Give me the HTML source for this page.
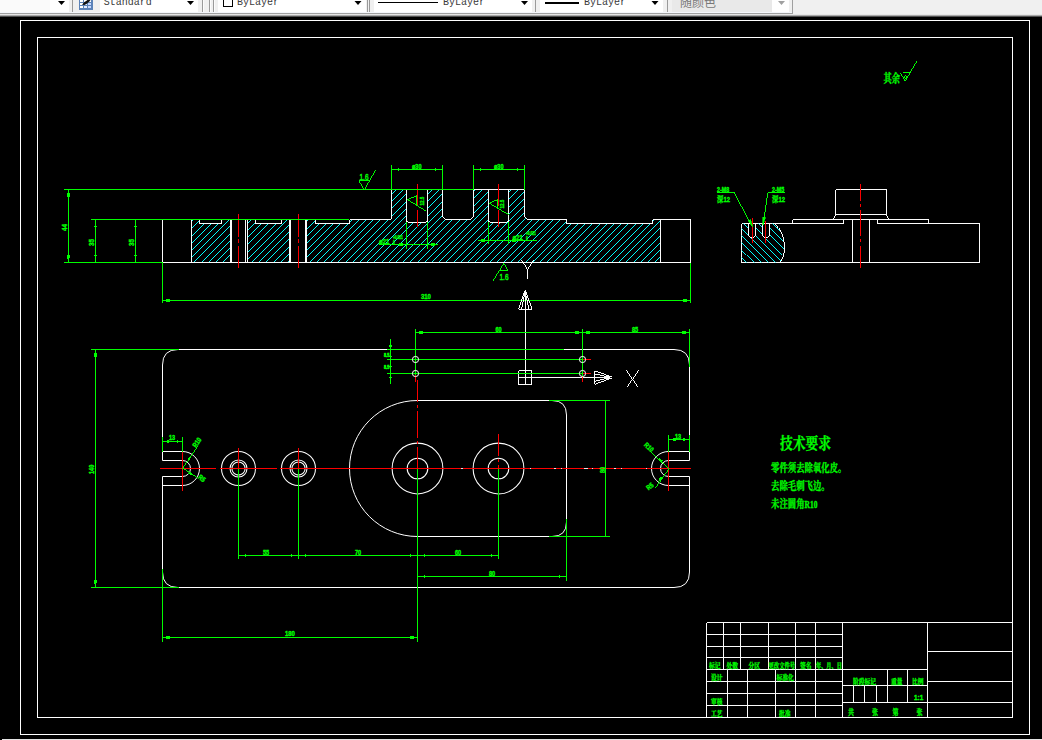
<!DOCTYPE html>
<html><head><meta charset="utf-8"><title>CAD</title>
<style>
html,body{margin:0;padding:0;background:#000;}
body{width:1042px;height:740px;overflow:hidden;position:relative;font-family:"Liberation Sans",sans-serif;}
svg{position:absolute;left:0;top:0;display:block;}
text{white-space:pre;}
</style></head><body>
<svg width="1042" height="740" viewBox="0 0 1042 740" shape-rendering="crispEdges">
<defs><clipPath id="hc1"><path d="M191.5,219.5 H199.5 V223.5 H221.5 V219.5 H230.4 V262.5 H191.5 Z M247,219.5 H255.5 V223.5 H281.5 V219.5 H289.9 V262.5 H247 Z M307,219.5 H315.5 V223.5 H349.5 V219.5 H389 Q391.5,219.5 391.5,217 V189.5 H406.5 V222 H427.5 V189.5 H442.5 V215 Q442.5,219.5 447,219.5 H469 Q473.5,219.5 473.5,215 V189.5 H488.5 V222 H508.5 V189.5 H524.5 V215 Q524.5,219.5 529,219.5 H566.5 V223.5 H652.5 V219.5 H660.5 V262.5 H307 Z"/></clipPath><clipPath id="hc2"><path d="M741.5,223.5 H748.5 V235 Q748.5,237.5 752,237.5 Q755.5,237.5 755.5,235 V223.5 H762.5 V235 Q762.5,237.5 766,237.5 Q769.5,237.5 769.5,235 V223.5 H775.5 Q783,231 784.5,245 Q785,256 780,262.5 H741.5 Z"/></clipPath></defs>
<rect x="0" y="0" width="1042" height="740" fill="#000" stroke="none" />
<rect x="20.5" y="20.5" width="1009" height="714" fill="none" stroke="#ffffff"/>
<rect x="37.5" y="37.5" width="975" height="680" fill="none" stroke="#ffffff"/>
<g clip-path="url(#hc1)" shape-rendering="crispEdges"><path d="M85.56,270 L175.56,180 M92.76,270 L182.76,180 M99.96,270 L189.96,180 M107.16,270 L197.16,180 M114.36,270 L204.36,180 M121.56,270 L211.56,180 M128.76,270 L218.76,180 M135.96,270 L225.96,180 M143.16,270 L233.16,180 M150.36,270 L240.36,180 M157.56,270 L247.56,180 M164.76,270 L254.76,180 M171.96,270 L261.96,180 M179.16,270 L269.16,180 M186.36,270 L276.36,180 M193.56,270 L283.56,180 M200.76,270 L290.76,180 M207.96,270 L297.96,180 M215.16,270 L305.16,180 M222.36,270 L312.36,180 M229.56,270 L319.56,180 M236.76,270 L326.76,180 M243.96,270 L333.96,180 M251.16,270 L341.16,180 M258.36,270 L348.36,180 M265.56,270 L355.56,180 M272.76,270 L362.76,180 M279.96,270 L369.96,180 M287.16,270 L377.16,180 M294.36,270 L384.36,180 M301.56,270 L391.56,180 M308.76,270 L398.76,180 M315.96,270 L405.96,180 M323.16,270 L413.16,180 M330.36,270 L420.36,180 M337.56,270 L427.56,180 M344.76,270 L434.76,180 M351.96,270 L441.96,180 M359.16,270 L449.16,180 M366.36,270 L456.36,180 M373.56,270 L463.56,180 M380.76,270 L470.76,180 M387.96,270 L477.96,180 M395.16,270 L485.16,180 M402.36,270 L492.36,180 M409.56,270 L499.56,180 M416.76,270 L506.76,180 M423.96,270 L513.96,180 M431.16,270 L521.16,180 M438.36,270 L528.36,180 M445.56,270 L535.56,180 M452.76,270 L542.76,180 M459.96,270 L549.96,180 M467.16,270 L557.16,180 M474.36,270 L564.36,180 M481.56,270 L571.56,180 M488.76,270 L578.76,180 M495.96,270 L585.96,180 M503.16,270 L593.16,180 M510.36,270 L600.36,180 M517.56,270 L607.56,180 M524.76,270 L614.76,180 M531.96,270 L621.96,180 M539.16,270 L629.16,180 M546.36,270 L636.36,180 M553.56,270 L643.56,180 M560.76,270 L650.76,180 M567.96,270 L657.96,180 M575.16,270 L665.16,180 M582.36,270 L672.36,180 M589.56,270 L679.56,180 M596.76,270 L686.76,180 M603.96,270 L693.96,180 M611.16,270 L701.16,180 M618.36,270 L708.36,180 M625.56,270 L715.56,180 M632.76,270 L722.76,180 M639.96,270 L729.96,180 M647.16,270 L737.16,180 M654.36,270 L744.36,180 M661.56,270 L751.56,180 M668.76,270 L758.76,180 M675.96,270 L765.96,180 M683.16,270 L773.16,180 M690.36,270 L780.36,180 M697.56,270 L787.56,180 M704.76,270 L794.76,180 M711.96,270 L801.96,180 M719.16,270 L809.16,180 M726.36,270 L816.36,180" stroke="#00ffff" stroke-width="0.99" fill="none"/></g>
<path d="M162.5,219.5 H199.5 V223.5 H221.5 V219.5 H255.5 V223.5 H281.5 V219.5 H315.5 V223.5 H349.5 V219.5 H389 Q391.5,219.5 391.5,217 V189.5 H442.5 V215 Q442.5,219.5 447,219.5 H469 Q473.5,219.5 473.5,215 V189.5 H524.5 V215 Q524.5,219.5 529,219.5 H566.5 V223.5 H652.5 V219.5 H690.5 V262.5 H162.5 Z" stroke="#ffffff" stroke-width="0.99" fill="none" />
<path d="M406.5,189.5 V220.5 Q406.5,222 408,222 H426 Q427.5,222 427.5,220.5 V189.5" stroke="#ffffff" stroke-width="0.99" fill="none" />
<path d="M488.5,189.5 V220.5 Q488.5,222 490,222 H507 Q508.5,222 508.5,220.5 V189.5" stroke="#ffffff" stroke-width="0.99" fill="none" />
<line x1="191.5" y1="219.5" x2="191.5" y2="262.5" stroke="#ffffff" stroke-width="0.99" />
<line x1="230.5" y1="219.5" x2="230.5" y2="262.5" stroke="#ffffff" stroke-width="0.99" />
<line x1="231.5" y1="219.5" x2="231.5" y2="262.5" stroke="#ffffff" stroke-width="0.99" />
<line x1="245.5" y1="219.5" x2="245.5" y2="262.5" stroke="#ffffff" stroke-width="0.99" />
<line x1="247.5" y1="219.5" x2="247.5" y2="262.5" stroke="#ffffff" stroke-width="0.99" />
<line x1="289.5" y1="219.5" x2="289.5" y2="262.5" stroke="#ffffff" stroke-width="0.99" />
<line x1="290.5" y1="219.5" x2="290.5" y2="262.5" stroke="#ffffff" stroke-width="0.99" />
<line x1="305.5" y1="219.5" x2="305.5" y2="262.5" stroke="#ffffff" stroke-width="0.99" />
<line x1="306.5" y1="219.5" x2="306.5" y2="262.5" stroke="#ffffff" stroke-width="0.99" />
<line x1="660.5" y1="219.5" x2="660.5" y2="262.5" stroke="#ffffff" stroke-width="0.99" />
<path d="M238.5,213.5 V237 M238.5,239 V243 M238.5,246 V268" stroke="#ff0000" stroke-width="0.99" fill="none" />
<path d="M298.5,213.5 V237 M298.5,239 V243 M298.5,246 V268" stroke="#ff0000" stroke-width="0.99" fill="none" />
<path d="M417.5,184 V205.5 M417.5,209.5 V226.5" stroke="#ff0000" stroke-width="0.99" fill="none" />
<path d="M498.5,184 V205.5 M498.5,209.5 V226.5" stroke="#ff0000" stroke-width="0.99" fill="none" />
<line x1="64" y1="189.5" x2="473.5" y2="189.5" stroke="#00ff00" stroke-width="0.99" />
<line x1="91" y1="219.5" x2="349" y2="219.5" stroke="#00ff00" stroke-width="0.99" />
<line x1="64" y1="262.5" x2="162.5" y2="262.5" stroke="#00ff00" stroke-width="0.99" />
<line x1="68.5" y1="189.5" x2="68.5" y2="262.5" stroke="#00ff00" stroke-width="0.99" />
<line x1="95.5" y1="219.5" x2="95.5" y2="262.5" stroke="#00ff00" stroke-width="0.99" />
<line x1="135.5" y1="219.5" x2="135.5" y2="262.5" stroke="#00ff00" stroke-width="0.99" />
<line x1="162.5" y1="262.5" x2="162.5" y2="303" stroke="#00ff00" stroke-width="0.99" />
<line x1="690.5" y1="262.5" x2="690.5" y2="303" stroke="#00ff00" stroke-width="0.99" />
<line x1="162.5" y1="300.5" x2="690.5" y2="300.5" stroke="#00ff00" stroke-width="0.99" />
<path d="M162.5,300.5 L170.0,298.6 L170.0,302.4 Z" fill="#00ff00" stroke="none"/>
<path d="M690.5,300.5 L683.0,298.6 L683.0,302.4 Z" fill="#00ff00" stroke="none"/>
<path d="M68.5,189.5 L66.6,197.0 L70.4,197.0 Z" fill="#00ff00" stroke="none"/>
<path d="M68.5,262.5 L66.6,255.0 L70.4,255.0 Z" fill="#00ff00" stroke="none"/>
<path d="M95.5,219.5 L94.4,227.0 L96.6,227.0 Z" fill="#00ff00" stroke="none"/>
<path d="M95.5,262.5 L94.4,255.0 L96.6,255.0 Z" fill="#00ff00" stroke="none"/>
<path d="M135.5,219.5 L134.4,227.0 L136.6,227.0 Z" fill="#00ff00" stroke="none"/>
<path d="M135.5,262.5 L134.4,255.0 L136.6,255.0 Z" fill="#00ff00" stroke="none"/>
<text transform="translate(67,231) rotate(-90) scale(0.9,1)" font-family="Liberation Sans" font-size="7" font-weight="bold" fill="#00ff00" stroke="#00ff00" stroke-width="0.35" text-anchor="start" >44</text>
<text transform="translate(94,246) rotate(-90) scale(0.9,1)" font-family="Liberation Sans" font-size="7" font-weight="bold" fill="#00ff00" stroke="#00ff00" stroke-width="0.35" text-anchor="start" >35</text>
<text transform="translate(134,246) rotate(-90) scale(0.9,1)" font-family="Liberation Sans" font-size="7" font-weight="bold" fill="#00ff00" stroke="#00ff00" stroke-width="0.35" text-anchor="start" >35</text>
<text transform="translate(421,298.5) scale(0.85,1)" font-family="Liberation Sans" font-size="7" font-weight="bold" fill="#00ff00" stroke="#00ff00" stroke-width="0.35" text-anchor="start" >310</text>
<line x1="391.5" y1="165" x2="391.5" y2="189.5" stroke="#00ff00" stroke-width="0.99" />
<line x1="442.5" y1="165" x2="442.5" y2="189.5" stroke="#00ff00" stroke-width="0.99" />
<line x1="391.5" y1="169.5" x2="442.5" y2="169.5" stroke="#00ff00" stroke-width="0.99" />
<path d="M391.5,169.5 L399.0,168.4 L399.0,170.6 Z" fill="#00ff00" stroke="none"/>
<path d="M442.5,169.5 L435.0,168.4 L435.0,170.6 Z" fill="#00ff00" stroke="none"/>
<line x1="473.5" y1="165" x2="473.5" y2="189.5" stroke="#00ff00" stroke-width="0.99" />
<line x1="524.5" y1="165" x2="524.5" y2="189.5" stroke="#00ff00" stroke-width="0.99" />
<line x1="473.5" y1="169.5" x2="524.5" y2="169.5" stroke="#00ff00" stroke-width="0.99" />
<path d="M473.5,169.5 L481.0,168.4 L481.0,170.6 Z" fill="#00ff00" stroke="none"/>
<path d="M524.5,169.5 L517.0,168.4 L517.0,170.6 Z" fill="#00ff00" stroke="none"/>
<text transform="translate(412,168.5) scale(0.85,1)" font-family="Liberation Sans" font-size="6.5" font-weight="bold" fill="#00ff00" stroke="#00ff00" stroke-width="0.35" text-anchor="start" >ø30</text>
<text transform="translate(494,168.5) scale(0.85,1)" font-family="Liberation Sans" font-size="6.5" font-weight="bold" fill="#00ff00" stroke="#00ff00" stroke-width="0.35" text-anchor="start" >ø30</text>
<line x1="406.5" y1="222" x2="406.5" y2="249" stroke="#00ff00" stroke-width="0.99" />
<line x1="427.5" y1="222" x2="427.5" y2="249" stroke="#00ff00" stroke-width="0.99" />
<line x1="379" y1="244.5" x2="438" y2="244.5" stroke="#00ff00" stroke-width="0.99" />
<path d="M406.5,244.5 L399.0,242.6 L399.0,246.4 Z" fill="#00ff00" stroke="none"/>
<path d="M427.5,244.5 L435.0,242.6 L435.0,246.4 Z" fill="#00ff00" stroke="none"/>
<text transform="translate(379,244) scale(0.75,1)" font-family="Liberation Sans" font-size="8" font-weight="bold" fill="#00ff00" stroke="#00ff00" stroke-width="0.35" text-anchor="start" >ø21</text>
<text transform="translate(393,239) scale(0.7,1)" font-family="Liberation Sans" font-size="4.5" font-weight="bold" fill="#00ff00" stroke="#00ff00" stroke-width="0.35" text-anchor="start" >+0.021</text>
<text transform="translate(393,243.5) scale(0.7,1)" font-family="Liberation Sans" font-size="4.5" font-weight="bold" fill="#00ff00" stroke="#00ff00" stroke-width="0.35" text-anchor="start" >0</text>
<line x1="488.5" y1="222" x2="488.5" y2="244" stroke="#00ff00" stroke-width="0.99" />
<line x1="508.5" y1="222" x2="508.5" y2="244" stroke="#00ff00" stroke-width="0.99" />
<line x1="478" y1="240.5" x2="537" y2="240.5" stroke="#00ff00" stroke-width="0.99" />
<path d="M488.5,240.5 L481.0,238.6 L481.0,242.4 Z" fill="#00ff00" stroke="none"/>
<path d="M508.5,240.5 L516.0,238.6 L516.0,242.4 Z" fill="#00ff00" stroke="none"/>
<text transform="translate(512.5,240) scale(0.75,1)" font-family="Liberation Sans" font-size="8" font-weight="bold" fill="#00ff00" stroke="#00ff00" stroke-width="0.35" text-anchor="start" >ø21</text>
<text transform="translate(526,235) scale(0.7,1)" font-family="Liberation Sans" font-size="4.5" font-weight="bold" fill="#00ff00" stroke="#00ff00" stroke-width="0.35" text-anchor="start" >+0.021</text>
<text transform="translate(526,239.5) scale(0.7,1)" font-family="Liberation Sans" font-size="4.5" font-weight="bold" fill="#00ff00" stroke="#00ff00" stroke-width="0.35" text-anchor="start" >0</text>
<path d="M359.3,180.5 H369 M359.3,180.5 L364.5,189.5 L375.7,170" stroke="#00ff00" stroke-width="0.99" fill="none" />
<text transform="translate(359.5,180) scale(0.68,1)" font-family="Liberation Sans" font-size="9.5" font-weight="normal" fill="#00ff00" stroke="#00ff00" stroke-width="0.5" text-anchor="start" >1.6</text>
<path d="M499.3,270.5 H508.4 M508.4,270.5 L503.9,262.5 L492.2,281" stroke="#00ff00" stroke-width="0.99" fill="none" />
<text transform="translate(499.5,280) scale(0.68,1)" font-family="Liberation Sans" font-size="9.5" font-weight="normal" fill="#00ff00" stroke="#00ff00" stroke-width="0.5" text-anchor="start" >1.6</text>
<path d="M416.5,195.4 V205.5 M416.5,195.4 L406.5,199.6 L426.2,211.8" stroke="#00ff00" stroke-width="0.99" fill="none" />
<text transform="translate(423.5,205.5) rotate(-90) scale(0.75,1)" font-family="Liberation Sans" font-size="6" font-weight="bold" fill="#00ff00" stroke="#00ff00" stroke-width="0.35" text-anchor="start" >12.5</text>
<path d="M497,199.3 V208 M497,199.3 L488.5,203.3 L508.5,215.2" stroke="#00ff00" stroke-width="0.99" fill="none" />
<text transform="translate(504,208.5) rotate(-90) scale(0.75,1)" font-family="Liberation Sans" font-size="6" font-weight="bold" fill="#00ff00" stroke="#00ff00" stroke-width="0.35" text-anchor="start" >12.5</text>
<path d="M843.5,223.5 H741.5 V262.5 H979.5 V223.5 H877.5" stroke="#ffffff" stroke-width="0.99" fill="none" />
<path d="M835.5,214.5 V189.5 H886.5 V214.5 H835.5 L832.5,219.5 M886.5,214.5 L889.5,219.5" stroke="#ffffff" stroke-width="0.99" fill="none" />
<path d="M792.5,223.5 V219.5 H928.5 V223.5 M843.5,219.5 V223.5 M877.5,219.5 V223.5" stroke="#ffffff" stroke-width="0.99" fill="none" />
<line x1="852.5" y1="219.5" x2="852.5" y2="262.5" stroke="#ffffff" stroke-width="0.99" />
<line x1="869.5" y1="219.5" x2="869.5" y2="262.5" stroke="#ffffff" stroke-width="0.99" />
<path d="M860.5,184 V201 M860.5,203.5 V206.5 M860.5,210 V235.5 M860.5,238.5 V242 M860.5,246 V268" stroke="#ff0000" stroke-width="0.99" fill="none" />
<g clip-path="url(#hc2)"><path d="M700,-0.30 L800,99.70 M700,6.90 L800,106.90 M700,14.10 L800,114.10 M700,21.30 L800,121.30 M700,28.50 L800,128.50 M700,35.70 L800,135.70 M700,42.90 L800,142.90 M700,50.10 L800,150.10 M700,57.30 L800,157.30 M700,64.50 L800,164.50 M700,71.70 L800,171.70 M700,78.90 L800,178.90 M700,86.10 L800,186.10 M700,93.30 L800,193.30 M700,100.50 L800,200.50 M700,107.70 L800,207.70 M700,114.90 L800,214.90 M700,122.10 L800,222.10 M700,129.30 L800,229.30 M700,136.50 L800,236.50 M700,143.70 L800,243.70 M700,150.90 L800,250.90 M700,158.10 L800,258.10 M700,165.30 L800,265.30 M700,172.50 L800,272.50 M700,179.70 L800,279.70 M700,186.90 L800,286.90 M700,194.10 L800,294.10 M700,201.30 L800,301.30 M700,208.50 L800,308.50 M700,215.70 L800,315.70 M700,222.90 L800,322.90 M700,230.10 L800,330.10 M700,237.30 L800,337.30 M700,244.50 L800,344.50 M700,251.70 L800,351.70 M700,258.90 L800,358.90 M700,266.10 L800,366.10 M700,273.30 L800,373.30 M700,280.50 L800,380.50 M700,287.70 L800,387.70 M700,294.90 L800,394.90" stroke="#00ffff" stroke-width="0.99" fill="none"/></g>
<path d="M775.5,223.5 Q783,231 784.5,245 Q785,256 780,262.5" stroke="#ffffff" stroke-width="0.99" fill="none" />
<path d="M748.5,223.5 V235 Q748.5,237.5 752,237.5 Q755.5,237.5 755.5,235 V223.5" stroke="#ffffff" stroke-width="0.99" fill="none" />
<path d="M762.5,223.5 V235 Q762.5,237.5 766,237.5 Q769.5,237.5 769.5,235 V223.5" stroke="#ffffff" stroke-width="0.99" fill="none" />
<line x1="752.5" y1="218" x2="752.5" y2="242.5" stroke="#ff0000" stroke-width="0.99" />
<line x1="765.5" y1="220.5" x2="765.5" y2="242.5" stroke="#ff0000" stroke-width="0.99" />
<path d="M717,192.5 H734.5 L753,227" stroke="#00ff00" stroke-width="0.99" fill="none" />
<path d="M753,227 L748.2,221 L750.6,219.8 Z" fill="#00ff00" stroke="#00ff00" stroke-width="0.6"/>
<path d="M784.5,192.5 H767.5 L766.5,202 L763,224.5" stroke="#00ff00" stroke-width="0.99" fill="none" />
<path d="M763,224.5 L762.8,217 L765.4,217.4 Z" fill="#00ff00" stroke="#00ff00" stroke-width="0.6"/>
<text transform="translate(717,191.5) scale(0.82,1)" font-family="Liberation Sans" font-size="6.5" font-weight="bold" fill="#00ff00" stroke="#00ff00" stroke-width="0.35" text-anchor="start" >2-M8</text>
<text transform="translate(717,201.8) scale(0.8,1)" font-family="'Liberation Serif','Noto Serif CJK SC',serif" font-size="8" font-weight="bold" fill="#00ff00" stroke="#00ff00" stroke-width="0.3" text-anchor="start" shape-rendering="geometricPrecision">深</text>
<text transform="translate(723.5,202) scale(0.75,1)" font-family="Liberation Sans" font-size="8" font-weight="bold" fill="#00ff00" stroke="#00ff00" stroke-width="0.35" text-anchor="start" >12</text>
<text transform="translate(772,191.5) scale(0.82,1)" font-family="Liberation Sans" font-size="6.5" font-weight="bold" fill="#00ff00" stroke="#00ff00" stroke-width="0.35" text-anchor="start" >2-M5</text>
<text transform="translate(772,201.8) scale(0.8,1)" font-family="'Liberation Serif','Noto Serif CJK SC',serif" font-size="8" font-weight="bold" fill="#00ff00" stroke="#00ff00" stroke-width="0.3" text-anchor="start" shape-rendering="geometricPrecision">深</text>
<text transform="translate(778.5,202) scale(0.75,1)" font-family="Liberation Sans" font-size="8" font-weight="bold" fill="#00ff00" stroke="#00ff00" stroke-width="0.35" text-anchor="start" >12</text>
<path d="M178,349.5 H674 Q689.5,349.5 689.5,365 V460.5 M689.5,476.5 V572 Q689.5,587.5 674,587.5 H178 Q162.5,587.5 162.5,572 V476.5 M162.5,460.5 V365 Q162.5,349.5 178,349.5" stroke="#ffffff" stroke-width="1" fill="none" shape-rendering="geometricPrecision"/>
<path d="M162.5,451.5 H182.5 A17,17 0 0 1 182.5,485.5 H162.5" stroke="#ffffff" stroke-width="1" fill="none" shape-rendering="geometricPrecision"/>
<path d="M162.5,460.5 H182.5 A8,8 0 0 1 182.5,476.5 H162.5" stroke="#ffffff" stroke-width="1" fill="none" shape-rendering="geometricPrecision"/>
<path d="M689.5,451.5 H668.5 A17,17 0 0 0 668.5,485.5 H689.5" stroke="#ffffff" stroke-width="1" fill="none" shape-rendering="geometricPrecision"/>
<path d="M689.5,460.5 H668.5 A8,8 0 0 0 668.5,476.5 H689.5" stroke="#ffffff" stroke-width="1" fill="none" shape-rendering="geometricPrecision"/>
<path d="M417.5,400.5 H552 Q566.5,400.5 566.5,415 V522 Q566.5,536.5 552,536.5 H417.5 A68,68 0 0 1 417.5,400.5" stroke="#ffffff" stroke-width="1" fill="none" shape-rendering="geometricPrecision"/>
<circle cx="238.5" cy="468.5" r="17" stroke="#ffffff" stroke-width="1.05" fill="none" shape-rendering="geometricPrecision"/>
<circle cx="238.5" cy="468.5" r="8.5" stroke="#ffffff" stroke-width="1.05" fill="none" shape-rendering="geometricPrecision"/>
<circle cx="238.5" cy="468.5" r="6.6" stroke="#ffffff" stroke-width="1.05" fill="none" shape-rendering="geometricPrecision"/>
<circle cx="298.5" cy="468.5" r="17" stroke="#ffffff" stroke-width="1.05" fill="none" shape-rendering="geometricPrecision"/>
<circle cx="298.5" cy="468.5" r="8.5" stroke="#ffffff" stroke-width="1.05" fill="none" shape-rendering="geometricPrecision"/>
<circle cx="298.5" cy="468.5" r="6.6" stroke="#ffffff" stroke-width="1.05" fill="none" shape-rendering="geometricPrecision"/>
<circle cx="417.5" cy="468.5" r="25.4" stroke="#ffffff" stroke-width="1.05" fill="none" shape-rendering="geometricPrecision"/>
<circle cx="417.5" cy="468.5" r="10.3" stroke="#ffffff" stroke-width="1.05" fill="none" shape-rendering="geometricPrecision"/>
<circle cx="498.5" cy="468.5" r="25.4" stroke="#ffffff" stroke-width="1.05" fill="none" shape-rendering="geometricPrecision"/>
<circle cx="498.5" cy="468.5" r="10.3" stroke="#ffffff" stroke-width="1.05" fill="none" shape-rendering="geometricPrecision"/>
<path d="M518.5,370.5 H531.5 V384.5 H518.5 Z M525.5,309 V384.5 M518.5,377.5 H594.5" stroke="#ffffff" stroke-width="0.99" fill="none" />
<path d="M518.5,309 H532 L525.2,290 Z M521.5,309 L525.2,292 L529,309 M525.2,292 V309" stroke="#ffffff" stroke-width="0.99" fill="none" />
<path d="M594.5,371 V384 L612,377.5 Z M594.5,374 L610,377.5 L594.5,381 M594.5,377.5 H610" stroke="#ffffff" stroke-width="0.99" fill="none" />
<path d="M521.6,260 L527.5,269.5 L533.7,260 M527.5,269.5 V278.5" stroke="#ffffff" stroke-width="0.99" fill="none" />
<path d="M626.5,369.5 L638.5,387 M638.5,369.5 L626.5,387" stroke="#ffffff" stroke-width="0.99" fill="none" />
<path d="M160,468.5 H216 M219.5,468.5 H277 M279.5,468.5 H691" stroke="#ff0000" stroke-width="0.99" fill="none" />
<line x1="461" y1="468.5" x2="463" y2="468.5" stroke="#e8e8e8" stroke-width="0.99" />
<line x1="530" y1="468.5" x2="531" y2="468.5" stroke="#e8e8e8" stroke-width="0.99" />
<line x1="554" y1="468.5" x2="556" y2="468.5" stroke="#e8e8e8" stroke-width="0.99" />
<line x1="560.5" y1="468.5" x2="562" y2="468.5" stroke="#e8e8e8" stroke-width="0.99" />
<line x1="584" y1="468.5" x2="588" y2="468.5" stroke="#e8e8e8" stroke-width="0.99" />
<line x1="591.5" y1="468.5" x2="593" y2="468.5" stroke="#e8e8e8" stroke-width="0.99" />
<line x1="614" y1="468.5" x2="616" y2="468.5" stroke="#e8e8e8" stroke-width="0.99" />
<line x1="620.5" y1="468.5" x2="622" y2="468.5" stroke="#e8e8e8" stroke-width="0.99" />
<line x1="645.5" y1="468.5" x2="647" y2="468.5" stroke="#e8e8e8" stroke-width="0.99" />
<line x1="182.5" y1="452" x2="182.5" y2="490.5" stroke="#ff0000" stroke-width="0.99" />
<line x1="668.5" y1="452" x2="668.5" y2="491" stroke="#ff0000" stroke-width="0.99" />
<line x1="238.5" y1="448" x2="238.5" y2="468.5" stroke="#ff0000" stroke-width="0.99" />
<line x1="298.5" y1="448" x2="298.5" y2="468.5" stroke="#ff0000" stroke-width="0.99" />
<path d="M417.5,379.5 V402 M417.5,405 V408 M417.5,411 V438 M417.5,441 V444 M417.5,447 V468.5" stroke="#ff0000" stroke-width="0.99" fill="none" />
<path d="M498.5,434 V456 M498.5,459 V462 M498.5,465 V468.5" stroke="#ff0000" stroke-width="0.99" fill="none" />
<line x1="91" y1="349.5" x2="179" y2="349.5" stroke="#00ff00" stroke-width="0.99" />
<line x1="91" y1="587.5" x2="179" y2="587.5" stroke="#00ff00" stroke-width="0.99" />
<line x1="95.5" y1="349.5" x2="95.5" y2="587.5" stroke="#00ff00" stroke-width="0.99" />
<path d="M95.5,349.5 L93.6,357.0 L97.4,357.0 Z" fill="#00ff00" stroke="none"/>
<path d="M95.5,587.5 L93.6,580.0 L97.4,580.0 Z" fill="#00ff00" stroke="none"/>
<text transform="translate(94,474) rotate(-90) scale(0.8,1)" font-family="Liberation Sans" font-size="7" font-weight="bold" fill="#00ff00" stroke="#00ff00" stroke-width="0.35" text-anchor="start" >140</text>
<line x1="387" y1="349.5" x2="564" y2="349.5" stroke="#00ff00" stroke-width="0.99" />
<line x1="390.5" y1="338.5" x2="390.5" y2="383.5" stroke="#00ff00" stroke-width="0.99" />
<line x1="387" y1="359.5" x2="582.5" y2="359.5" stroke="#00ff00" stroke-width="0.99" />
<line x1="387" y1="373.5" x2="582.5" y2="373.5" stroke="#00ff00" stroke-width="0.99" />
<text transform="translate(384,357.3) scale(0.85,1)" font-family="Liberation Sans" font-size="4.5" font-weight="bold" fill="#00ff00" stroke="#00ff00" stroke-width="0.5" text-anchor="start" >8.5</text>
<text transform="translate(384,369.3) scale(0.85,1)" font-family="Liberation Sans" font-size="4.5" font-weight="bold" fill="#00ff00" stroke="#00ff00" stroke-width="0.5" text-anchor="start" >8.5</text>
<path d="M390.5,339.5 L389.3,346.5 L391.7,346.5 Z" fill="#00ff00" stroke="none"/>
<path d="M390.5,350.0 L389.3,357.0 L391.7,357.0 Z" fill="#00ff00" stroke="none"/>
<path d="M390.5,360.0 L389.3,367.0 L391.7,367.0 Z" fill="#00ff00" stroke="none"/>
<path d="M390.5,384 L389.3,377 L391.7,377 Z" fill="#00ff00" stroke="none"/>
<line x1="415.5" y1="329" x2="415.5" y2="374.5" stroke="#00ff00" stroke-width="0.99" />
<line x1="415.5" y1="374.5" x2="415.5" y2="381.5" stroke="#ff0000" stroke-width="0.99" />
<line x1="582.5" y1="329" x2="582.5" y2="375.5" stroke="#00ff00" stroke-width="0.99" />
<line x1="582.5" y1="375.5" x2="582.5" y2="382" stroke="#ff0000" stroke-width="0.99" />
<line x1="582.5" y1="359.5" x2="591" y2="359.5" stroke="#ff0000" stroke-width="0.99" />
<line x1="582.5" y1="373.5" x2="591" y2="373.5" stroke="#ff0000" stroke-width="0.99" />
<line x1="415.5" y1="332.5" x2="689.5" y2="332.5" stroke="#00ff00" stroke-width="0.99" />
<path d="M415.5,332.5 L423.0,330.6 L423.0,334.4 Z" fill="#00ff00" stroke="none"/>
<path d="M582.5,332.5 L575.0,330.6 L575.0,334.4 Z" fill="#00ff00" stroke="none"/>
<path d="M582.5,332.5 L590.0,330.6 L590.0,334.4 Z" fill="#00ff00" stroke="none"/>
<path d="M689.5,332.5 L682.0,330.6 L682.0,334.4 Z" fill="#00ff00" stroke="none"/>
<text transform="translate(495.5,332) scale(0.85,1)" font-family="Liberation Sans" font-size="6.5" font-weight="bold" fill="#00ff00" stroke="#00ff00" stroke-width="0.35" text-anchor="start" >60</text>
<text transform="translate(632,332) scale(0.85,1)" font-family="Liberation Sans" font-size="6.5" font-weight="bold" fill="#00ff00" stroke="#00ff00" stroke-width="0.35" text-anchor="start" >85</text>
<circle cx="415.5" cy="359.5" r="3.1" stroke="#ffffff" stroke-width="1" fill="none" shape-rendering="geometricPrecision"/>
<circle cx="415.5" cy="373.5" r="3.1" stroke="#ffffff" stroke-width="1" fill="none" shape-rendering="geometricPrecision"/>
<circle cx="582.5" cy="359.5" r="3.1" stroke="#ffffff" stroke-width="1" fill="none" shape-rendering="geometricPrecision"/>
<circle cx="582.5" cy="373.5" r="3.1" stroke="#ffffff" stroke-width="1" fill="none" shape-rendering="geometricPrecision"/>
<line x1="689.5" y1="329" x2="689.5" y2="366.5" stroke="#00ff00" stroke-width="0.99" />
<line x1="162.5" y1="437" x2="162.5" y2="451.5" stroke="#00ff00" stroke-width="0.99" />
<line x1="182.5" y1="437" x2="182.5" y2="451.5" stroke="#00ff00" stroke-width="0.99" />
<line x1="162.5" y1="441.5" x2="182.5" y2="441.5" stroke="#00ff00" stroke-width="0.99" />
<path d="M162.5,441.5 L168.5,440.2 L168.5,442.8 Z" fill="#00ff00" stroke="none"/>
<path d="M182.5,441.5 L176.5,440.2 L176.5,442.8 Z" fill="#00ff00" stroke="none"/>
<text transform="translate(169,440) scale(0.85,1)" font-family="Liberation Sans" font-size="6.5" font-weight="bold" fill="#00ff00" stroke="#00ff00" stroke-width="0.35" text-anchor="start" >13</text>
<line x1="668.5" y1="435" x2="668.5" y2="452" stroke="#00ff00" stroke-width="0.99" />
<line x1="689.5" y1="435" x2="689.5" y2="452" stroke="#00ff00" stroke-width="0.99" />
<line x1="668.5" y1="439.5" x2="689.5" y2="439.5" stroke="#00ff00" stroke-width="0.99" />
<path d="M668.5,439.5 L675.5,437.8 L675.5,441.2 Z" fill="#00ff00" stroke="none"/>
<path d="M689.5,439.5 L682.5,437.8 L682.5,441.2 Z" fill="#00ff00" stroke="none"/>
<text transform="translate(675,438.8) scale(0.85,1)" font-family="Liberation Sans" font-size="6.5" font-weight="bold" fill="#00ff00" stroke="#00ff00" stroke-width="0.35" text-anchor="start" >13</text>
<path d="M182.5,468.5 L198,446 M182.5,468.5 L196.5,478" stroke="#00ff00" stroke-width="0.99" fill="none" />
<path d="M192.2,454.5 L187.6,458.8 L189.6,460.5 Z M193,475.7 L188.2,473.8 L189.8,471.6 Z" fill="#00ff00"/>
<text transform="translate(196,448) rotate(-55) scale(0.8,1)" font-family="Liberation Sans" font-size="7" font-weight="bold" fill="#00ff00" stroke="#00ff00" stroke-width="0.35" text-anchor="start" >R10</text>
<text transform="translate(197.5,478) rotate(38) scale(0.8,1)" font-family="Liberation Sans" font-size="7" font-weight="bold" fill="#00ff00" stroke="#00ff00" stroke-width="0.35" text-anchor="start" >R5</text>
<path d="M668.5,468.5 L650,451.5 M668.5,468.5 L655,487.6" stroke="#00ff00" stroke-width="0.99" fill="none" />
<path d="M657.5,457 L662.8,460.5 L661.2,462.3 Z M658,482.5 L660.2,476.5 L662.3,478 Z" fill="#00ff00"/>
<text transform="translate(643.5,445.5) rotate(43) scale(0.8,1)" font-family="Liberation Sans" font-size="7" font-weight="bold" fill="#00ff00" stroke="#00ff00" stroke-width="0.35" text-anchor="start" >R10</text>
<text transform="translate(648.5,490.5) rotate(-38) scale(0.8,1)" font-family="Liberation Sans" font-size="7" font-weight="bold" fill="#00ff00" stroke="#00ff00" stroke-width="0.35" text-anchor="start" >R5</text>
<line x1="549" y1="400.5" x2="610" y2="400.5" stroke="#00ff00" stroke-width="0.99" />
<line x1="549" y1="536.5" x2="609.5" y2="536.5" stroke="#00ff00" stroke-width="0.99" />
<line x1="605.5" y1="400.5" x2="605.5" y2="536.5" stroke="#00ff00" stroke-width="0.99" />
<text transform="translate(605,473) rotate(-90) scale(0.8,1)" font-family="Liberation Sans" font-size="7" font-weight="bold" fill="#00ff00" stroke="#00ff00" stroke-width="0.35" text-anchor="start" >80</text>
<line x1="238.5" y1="468.5" x2="238.5" y2="558.5" stroke="#00ff00" stroke-width="0.99" />
<line x1="298.5" y1="468.5" x2="298.5" y2="558.5" stroke="#00ff00" stroke-width="0.99" />
<line x1="417.5" y1="468.5" x2="417.5" y2="642" stroke="#00ff00" stroke-width="0.99" />
<line x1="498.5" y1="468.5" x2="498.5" y2="558.5" stroke="#00ff00" stroke-width="0.99" />
<line x1="238.5" y1="555.5" x2="498.5" y2="555.5" stroke="#00ff00" stroke-width="0.99" />
<text transform="translate(263,554.5) scale(0.85,1)" font-family="Liberation Sans" font-size="6.5" font-weight="bold" fill="#00ff00" stroke="#00ff00" stroke-width="0.35" text-anchor="start" >55</text>
<text transform="translate(355,554.5) scale(0.85,1)" font-family="Liberation Sans" font-size="6.5" font-weight="bold" fill="#00ff00" stroke="#00ff00" stroke-width="0.35" text-anchor="start" >70</text>
<text transform="translate(455,554.5) scale(0.85,1)" font-family="Liberation Sans" font-size="6.5" font-weight="bold" fill="#00ff00" stroke="#00ff00" stroke-width="0.35" text-anchor="start" >60</text>
<path d="M238.5,555.5 L246.0,554.4 L246.0,556.6 Z" fill="#00ff00" stroke="none"/>
<path d="M298.5,555.5 L306.0,554.4 L306.0,556.6 Z" fill="#00ff00" stroke="none"/>
<path d="M417.5,555.5 L425.0,554.4 L425.0,556.6 Z" fill="#00ff00" stroke="none"/>
<path d="M298.5,555.5 L291.0,554.4 L291.0,556.6 Z" fill="#00ff00" stroke="none"/>
<path d="M417.5,555.5 L410.0,554.4 L410.0,556.6 Z" fill="#00ff00" stroke="none"/>
<path d="M498.5,555.5 L491.0,554.4 L491.0,556.6 Z" fill="#00ff00" stroke="none"/>
<line x1="566.5" y1="519" x2="566.5" y2="580.5" stroke="#00ff00" stroke-width="0.99" />
<line x1="417.5" y1="576.5" x2="566.5" y2="576.5" stroke="#00ff00" stroke-width="0.99" />
<path d="M417.5,576.5 L425.0,575.4 L425.0,577.6 Z" fill="#00ff00" stroke="none"/>
<path d="M566.5,576.5 L559.0,575.4 L559.0,577.6 Z" fill="#00ff00" stroke="none"/>
<text transform="translate(489,575.5) scale(0.85,1)" font-family="Liberation Sans" font-size="6.5" font-weight="bold" fill="#00ff00" stroke="#00ff00" stroke-width="0.35" text-anchor="start" >80</text>
<line x1="162.5" y1="569" x2="162.5" y2="642" stroke="#00ff00" stroke-width="0.99" />
<line x1="162.5" y1="637.5" x2="417.5" y2="637.5" stroke="#00ff00" stroke-width="0.99" />
<path d="M162.5,637.5 L170.0,635.6 L170.0,639.4 Z" fill="#00ff00" stroke="none"/>
<path d="M417.5,637.5 L410.0,635.6 L410.0,639.4 Z" fill="#00ff00" stroke="none"/>
<text transform="translate(285,636) scale(0.85,1)" font-family="Liberation Sans" font-size="7" font-weight="bold" fill="#00ff00" stroke="#00ff00" stroke-width="0.35" text-anchor="start" >180</text>
<text transform="translate(780,448.5) scale(0.8,1)" font-family="'Liberation Serif','Noto Serif CJK SC',serif" font-size="16" font-weight="bold" fill="#00ff00" stroke="#00ff00" stroke-width="0.3" text-anchor="start" shape-rendering="geometricPrecision">技术要求</text>
<text transform="translate(771,472) scale(0.73,1)" font-family="'Liberation Serif','Noto Serif CJK SC',serif" font-size="11.5" font-weight="bold" fill="#00ff00" stroke="#00ff00" stroke-width="0.3" text-anchor="start" shape-rendering="geometricPrecision">零件须去除氧化皮。</text>
<text transform="translate(771,489.5) scale(0.73,1)" font-family="'Liberation Serif','Noto Serif CJK SC',serif" font-size="11.5" font-weight="bold" fill="#00ff00" stroke="#00ff00" stroke-width="0.3" text-anchor="start" shape-rendering="geometricPrecision">去除毛刺飞边。</text>
<text transform="translate(771,508) scale(0.73,1)" font-family="'Liberation Serif','Noto Serif CJK SC',serif" font-size="11.5" font-weight="bold" fill="#00ff00" stroke="#00ff00" stroke-width="0.3" text-anchor="start" shape-rendering="geometricPrecision">未注圆角</text>
<text transform="translate(804.5,508) scale(0.68,1)" font-family="Liberation Serif" font-size="11" font-weight="bold" fill="#00ff00" stroke="#00ff00" stroke-width="0.35" text-anchor="start" >R10</text>
<text transform="translate(883.5,82.5) scale(0.69,1)" font-family="'Liberation Serif','Noto Serif CJK SC',serif" font-size="12" font-weight="bold" fill="#00ff00" stroke="#00ff00" stroke-width="0.3" text-anchor="start" shape-rendering="geometricPrecision">其余</text>
<path d="M903,72.5 H909.5 M900.5,72.5 L905.5,80.5 L917,61" stroke="#00ff00" stroke-width="0.99" fill="none" />
<circle cx="905.5" cy="77" r="1.3" stroke="#00ff00" stroke-width="0.99" fill="none" />
<path d="M706.5,622.5 H842.5 M706.5,634.5 H842.5 M706.5,646.5 H842.5 M706.5,657.5 H842.5 M706.5,669.5 H842.5 M706.5,681.5 H842.5 M706.5,693.5 H842.5 M706.5,705.5 H842.5 M706.5,622.5 V717.5 M842.5,622.5 V717.5 M723.5,622.5 V669.5 M740.5,622.5 V669.5 M768.5,622.5 V669.5 M795.5,622.5 V669.5 M815.5,622.5 V669.5 M727.5,669.5 V717.5 M747.5,669.5 V717.5 M775,669.5 V717.5 M795.5,669.5 V717.5 M815.5,669.5 V717.5 M842.5,622.5 H1012.5 M842.5,669.5 H927.5 M842.5,685.5 H927.5 M842.5,702.5 H1012.5 M927.5,622.5 V717.5 M887.5,669.5 V702.5 M907.5,669.5 V702.5 M853.5,685.5 V702.5 M864.5,685.5 V702.5 M876.5,685.5 V702.5 M927.5,651.5 H1012.5 M927.5,681.5 H1012.5" stroke="#ffffff" stroke-width="0.99" fill="none" />
<text transform="translate(709,668) scale(0.8,1)" font-family="'Liberation Serif','Noto Serif CJK SC',serif" font-size="7.2" font-weight="bold" fill="#00ff00" stroke="#00ff00" stroke-width="0.3" text-anchor="start" shape-rendering="geometricPrecision">标记</text>
<text transform="translate(726.5,668) scale(0.8,1)" font-family="'Liberation Serif','Noto Serif CJK SC',serif" font-size="7.2" font-weight="bold" fill="#00ff00" stroke="#00ff00" stroke-width="0.3" text-anchor="start" shape-rendering="geometricPrecision">处数</text>
<text transform="translate(748.5,668) scale(0.8,1)" font-family="'Liberation Serif','Noto Serif CJK SC',serif" font-size="7.2" font-weight="bold" fill="#00ff00" stroke="#00ff00" stroke-width="0.3" text-anchor="start" shape-rendering="geometricPrecision">分区</text>
<text transform="translate(768.5,668) scale(0.74,1)" font-family="'Liberation Serif','Noto Serif CJK SC',serif" font-size="7.2" font-weight="bold" fill="#00ff00" stroke="#00ff00" stroke-width="0.3" text-anchor="start" shape-rendering="geometricPrecision">更改文件号</text>
<text transform="translate(800,668) scale(0.8,1)" font-family="'Liberation Serif','Noto Serif CJK SC',serif" font-size="7.2" font-weight="bold" fill="#00ff00" stroke="#00ff00" stroke-width="0.3" text-anchor="start" shape-rendering="geometricPrecision">签名</text>
<text transform="translate(816,668) scale(0.72,1)" font-family="'Liberation Serif','Noto Serif CJK SC',serif" font-size="7.2" font-weight="bold" fill="#00ff00" stroke="#00ff00" stroke-width="0.3" text-anchor="start" shape-rendering="geometricPrecision">年、月、日</text>
<text transform="translate(711,680) scale(0.8,1)" font-family="'Liberation Serif','Noto Serif CJK SC',serif" font-size="7.2" font-weight="bold" fill="#00ff00" stroke="#00ff00" stroke-width="0.3" text-anchor="start" shape-rendering="geometricPrecision">设计</text>
<text transform="translate(776.5,680) scale(0.8,1)" font-family="'Liberation Serif','Noto Serif CJK SC',serif" font-size="7.2" font-weight="bold" fill="#00ff00" stroke="#00ff00" stroke-width="0.3" text-anchor="start" shape-rendering="geometricPrecision">标准化</text>
<text transform="translate(711,704) scale(0.8,1)" font-family="'Liberation Serif','Noto Serif CJK SC',serif" font-size="7.2" font-weight="bold" fill="#00ff00" stroke="#00ff00" stroke-width="0.3" text-anchor="start" shape-rendering="geometricPrecision">审核</text>
<text transform="translate(711,716) scale(0.8,1)" font-family="'Liberation Serif','Noto Serif CJK SC',serif" font-size="7.2" font-weight="bold" fill="#00ff00" stroke="#00ff00" stroke-width="0.3" text-anchor="start" shape-rendering="geometricPrecision">工艺</text>
<text transform="translate(779,716) scale(0.8,1)" font-family="'Liberation Serif','Noto Serif CJK SC',serif" font-size="7.2" font-weight="bold" fill="#00ff00" stroke="#00ff00" stroke-width="0.3" text-anchor="start" shape-rendering="geometricPrecision">批准</text>
<text transform="translate(853,683.5) scale(0.8,1)" font-family="'Liberation Serif','Noto Serif CJK SC',serif" font-size="7.2" font-weight="bold" fill="#00ff00" stroke="#00ff00" stroke-width="0.3" text-anchor="start" shape-rendering="geometricPrecision">阶段标记</text>
<text transform="translate(891,683.5) scale(0.8,1)" font-family="'Liberation Serif','Noto Serif CJK SC',serif" font-size="7.2" font-weight="bold" fill="#00ff00" stroke="#00ff00" stroke-width="0.3" text-anchor="start" shape-rendering="geometricPrecision">重量</text>
<text transform="translate(912,683.5) scale(0.8,1)" font-family="'Liberation Serif','Noto Serif CJK SC',serif" font-size="7.2" font-weight="bold" fill="#00ff00" stroke="#00ff00" stroke-width="0.3" text-anchor="start" shape-rendering="geometricPrecision">比例</text>
<text transform="translate(914,700) scale(0.85,1)" font-family="Liberation Sans" font-size="7.5" font-weight="bold" fill="#00ff00" stroke="#00ff00" stroke-width="0.35" text-anchor="start" >1:1</text>
<text transform="translate(848,715) scale(0.75,1)" font-family="'Liberation Serif','Noto Serif CJK SC',serif" font-size="8" font-weight="bold" fill="#00ff00" stroke="#00ff00" stroke-width="0.3" text-anchor="start" shape-rendering="geometricPrecision">共</text>
<text transform="translate(872,715) scale(0.75,1)" font-family="'Liberation Serif','Noto Serif CJK SC',serif" font-size="8" font-weight="bold" fill="#00ff00" stroke="#00ff00" stroke-width="0.3" text-anchor="start" shape-rendering="geometricPrecision">张</text>
<text transform="translate(892.5,715) scale(0.75,1)" font-family="'Liberation Serif','Noto Serif CJK SC',serif" font-size="8" font-weight="bold" fill="#00ff00" stroke="#00ff00" stroke-width="0.3" text-anchor="start" shape-rendering="geometricPrecision">第</text>
<text transform="translate(916.5,715) scale(0.75,1)" font-family="'Liberation Serif','Noto Serif CJK SC',serif" font-size="8" font-weight="bold" fill="#00ff00" stroke="#00ff00" stroke-width="0.3" text-anchor="start" shape-rendering="geometricPrecision">张</text>
<g shape-rendering="crispEdges">
<rect x="0" y="0" width="1042" height="15" fill="#f0f0f0" stroke="none" />
<rect x="0" y="12" width="793" height="1" fill="#f4f6fb" stroke="none" />
<rect x="0" y="13" width="793" height="1" fill="#a0a0a0" stroke="none" />
<rect x="0" y="14" width="1042" height="1" fill="#e6e6e6" stroke="none" />
<rect x="0" y="15" width="1042" height="1" fill="#a8a8a8" stroke="none" />
<rect x="0" y="16" width="1042" height="1" fill="#505050" stroke="none" />
<rect x="0" y="0" width="69" height="12" fill="#ffffff" stroke="none" />
<path d="M58.0,1 H65.0 L61.5,5 Z" fill="#000000" shape-rendering="geometricPrecision"/>
<rect x="0" y="0" width="50" height="12" fill="#fafafa" stroke="none" />
<rect x="100" y="0" width="98" height="12" fill="#ffffff" stroke="none" />
<path d="M187.0,1 H194.0 L190.5,5 Z" fill="#000000" shape-rendering="geometricPrecision"/>
<rect x="218" y="0" width="147.5" height="12" fill="#ffffff" stroke="none" />
<path d="M354.5,1 H361.5 L358.0,5 Z" fill="#000000" shape-rendering="geometricPrecision"/>
<rect x="374" y="0" width="158" height="12" fill="#ffffff" stroke="none" />
<path d="M521.0,1 H528.0 L524.5,5 Z" fill="#000000" shape-rendering="geometricPrecision"/>
<rect x="539.5" y="0" width="123.0" height="12" fill="#ffffff" stroke="none" />
<path d="M651.5,1 H658.5 L655.0,5 Z" fill="#000000" shape-rendering="geometricPrecision"/>
<rect x="672" y="0" width="117" height="12" fill="#ffffff" stroke="none" />
<path d="M778.0,1 H785.0 L781.5,5 Z" fill="#a0a0a0" shape-rendering="geometricPrecision"/>
<rect x="672" y="0" width="100" height="12" fill="#e9e9e9" stroke="none" />
<rect x="72" y="0" width="1" height="12" fill="#9a9a9a" stroke="none" />
<rect x="202" y="0" width="1" height="12" fill="#9a9a9a" stroke="none" />
<rect x="209" y="0" width="1" height="12" fill="#9a9a9a" stroke="none" />
<rect x="213" y="0" width="1" height="12" fill="#9a9a9a" stroke="none" />
<rect x="367" y="0" width="1" height="12" fill="#9a9a9a" stroke="none" />
<rect x="369" y="0" width="1" height="12" fill="#9a9a9a" stroke="none" />
<rect x="535" y="0" width="1" height="12" fill="#9a9a9a" stroke="none" />
<rect x="667" y="0" width="1" height="12" fill="#9a9a9a" stroke="none" />
<rect x="203" y="0" width="1" height="12" fill="#fcfcfc" stroke="none" />
<rect x="210" y="0" width="1" height="12" fill="#fcfcfc" stroke="none" />
<rect x="214" y="0" width="1" height="12" fill="#fcfcfc" stroke="none" />
<rect x="792" y="0" width="1" height="14" fill="#a0a0a0" stroke="none" />
<rect x="79" y="-1" width="14" height="11" fill="#5b82b8" stroke="none" />
<rect x="80" y="0" width="3" height="2.2" fill="#ffffff" stroke="none" />
<rect x="80" y="3" width="3" height="2.2" fill="#ffffff" stroke="none" />
<rect x="80" y="6" width="3" height="2.2" fill="#ffffff" stroke="none" />
<rect x="84" y="0" width="3" height="2.2" fill="#ffffff" stroke="none" />
<rect x="84" y="3" width="3" height="2.2" fill="#e4ecff" stroke="none" />
<rect x="84" y="6" width="3" height="2.2" fill="#e4ecff" stroke="none" />
<rect x="88" y="0" width="3" height="2.2" fill="#ffffff" stroke="none" />
<rect x="88" y="3" width="3" height="2.2" fill="#c4d6ff" stroke="none" />
<rect x="88" y="6" width="3" height="2.2" fill="#c4d6ff" stroke="none" />
<path d="M82,4.8 L84.5,2 L88.5,-0.5 L90.5,0.5 L87,3.6 L84.5,5 Z" fill="#111" shape-rendering="geometricPrecision"/>
<text transform="translate(103.7,5)" font-family="Liberation Mono" font-size="10" font-weight="normal" fill="#3a3a3a" stroke="#3a3a3a" stroke-width="0" text-anchor="start" >Standard</text>
<rect x="223.5" y="-2" width="9" height="8.5" fill="#fff" stroke="#000" />
<text transform="translate(237,5)" font-family="Liberation Mono" font-size="10" font-weight="normal" fill="#3a3a3a" stroke="#3a3a3a" stroke-width="0" text-anchor="start" >ByLayer</text>
<rect x="378" y="2" width="60" height="1" fill="#000" stroke="none" />
<text transform="translate(443,5)" font-family="Liberation Mono" font-size="10" font-weight="normal" fill="#3a3a3a" stroke="#3a3a3a" stroke-width="0" text-anchor="start" >ByLayer</text>
<rect x="544.5" y="1.5" width="34.5" height="2.5" fill="#000" stroke="none" />
<text transform="translate(584,5)" font-family="Liberation Mono" font-size="10" font-weight="normal" fill="#3a3a3a" stroke="#3a3a3a" stroke-width="0" text-anchor="start" >ByLayer</text>
<text transform="translate(680,6.5)" font-family="'Liberation Sans','Noto Sans CJK SC',sans-serif" font-size="12" font-weight="normal" fill="#787878" stroke="none" text-anchor="start" shape-rendering="geometricPrecision">随颜色</text>
</g>
<rect x="2" y="739" width="1040" height="1" fill="#e4e4e4" stroke="none" />
</svg>
</body></html>
